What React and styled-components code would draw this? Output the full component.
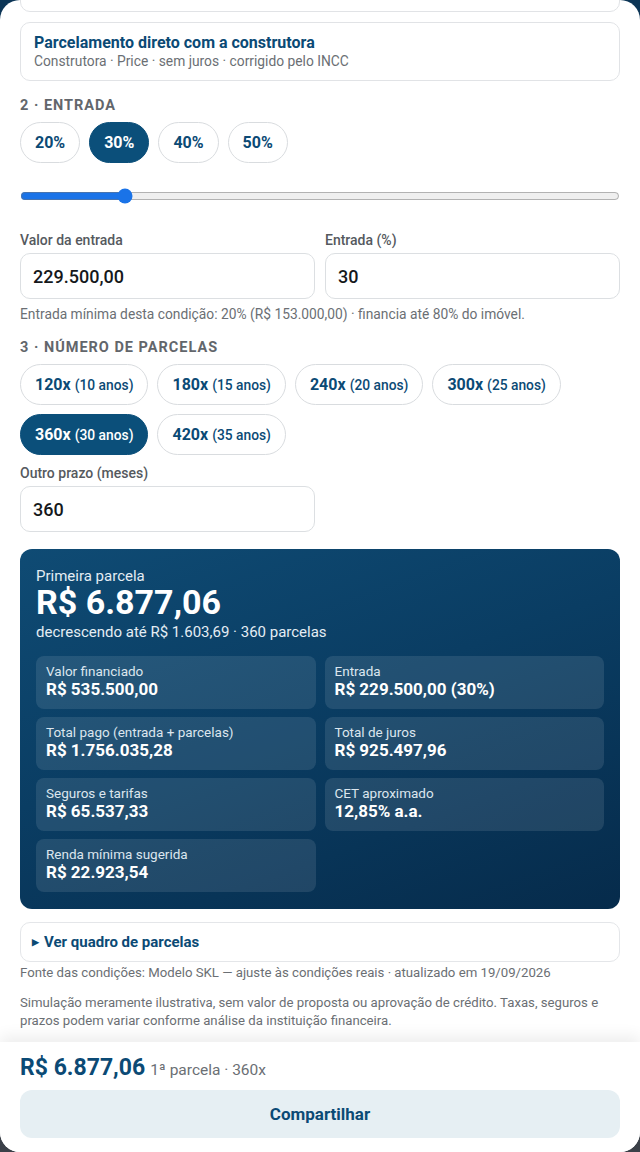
import React from "react";
import styled, { createGlobalStyle } from "styled-components";

const navy = "#0b4a75";

const GlobalStyle = createGlobalStyle`
  * { box-sizing: border-box; }
  html, body {
    margin: 0;
    padding: 0;
    height: 100%;
  }
  body {
    font-family: Roboto, "Noto Sans", Arial, sans-serif;
    background: linear-gradient(180deg, #0c3556 0%, #1f3448 60%, #3b4048 100%);
    overflow: hidden;
  }
`;

const entradas = [20, 30, 40, 50];
const prazos = [
  { n: 120, anos: 10 },
  { n: 180, anos: 15 },
  { n: 240, anos: 20 },
  { n: 300, anos: 25 },
  { n: 360, anos: 30 },
  { n: 420, anos: 35 },
];

const stats = [
  { label: "Valor financiado", value: "R$ 535.500,00" },
  { label: "Entrada", value: "R$ 229.500,00 (30%)" },
  { label: "Total pago (entrada + parcelas)", value: "R$ 1.756.035,28" },
  { label: "Total de juros", value: "R$ 925.497,96" },
  { label: "Seguros e tarifas", value: "R$ 65.537,33" },
  { label: "CET aproximado", value: "12,85% a.a." },
  { label: "Renda mínima sugerida", value: "R$ 22.923,54" },
];

const App = () => {
  return (
    <>
      <GlobalStyle />
      <Sheet>
        <Scroll>
          <Content>
            <OptionCard>
              <OptionTitle>Financiamento bancário</OptionTitle>
              <OptionSub>Banco · SAC · juros pós-fixados</OptionSub>
            </OptionCard>
            <OptionCard>
              <OptionTitle>Parcelamento direto com a construtora</OptionTitle>
              <OptionSub>Construtora · Price · sem juros · corrigido pelo INCC</OptionSub>
            </OptionCard>

            <SectionTitle>2 · Entrada</SectionTitle>
            <Chips>
              {entradas.map((p) => (
                <Chip key={p} $active={p === 30}>{p}%</Chip>
              ))}
            </Chips>
            <Range type="range" min={20} max={80} defaultValue={30} />

            <FieldRow>
              <Field>
                <Label>Valor da entrada</Label>
                <Input defaultValue="229.500,00" />
              </Field>
              <Field>
                <Label>Entrada (%)</Label>
                <Input defaultValue="30" />
              </Field>
            </FieldRow>
            <Hint>Entrada mínima desta condição: 20% (R$ 153.000,00) · financia até 80% do imóvel.</Hint>

            <SectionTitle $gap={18}>3 · Número de parcelas</SectionTitle>
            <Chips>
              {prazos.map((p) => (
                <Chip key={p.n} $active={p.n === 360}>
                  {p.n}x <small>({p.anos} anos)</small>
                </Chip>
              ))}
            </Chips>
            <HalfField>
              <Label>Outro prazo (meses)</Label>
              <Input defaultValue="360" />
            </HalfField>

            <Result>
              <ResultLabel>Primeira parcela</ResultLabel>
              <ResultValue>R$ 6.877,06</ResultValue>
              <ResultSub>decrescendo até R$ 1.603,69 · 360 parcelas</ResultSub>
              <StatGrid>
                {stats.map((s) => (
                  <Stat key={s.label}>
                    <StatLabel>{s.label}</StatLabel>
                    <StatValue>{s.value}</StatValue>
                  </Stat>
                ))}
              </StatGrid>
            </Result>

            <Details>
              <Summary>Ver quadro de parcelas</Summary>
            </Details>
            <Note>Fonte das condições: Modelo SKL — ajuste às condições reais · atualizado em 19/09/2026</Note>
            <Note $gap={12}>
              Simulação meramente ilustrativa, sem valor de proposta ou aprovação de crédito. Taxas, seguros e
              prazos podem variar conforme análise da instituição financeira.
            </Note>
          </Content>
        </Scroll>

        <Footer>
          <FooterPrice>
            <strong>R$ 6.877,06</strong>
            <span>1ª parcela · 360x</span>
          </FooterPrice>
          <ShareButton>Compartilhar</ShareButton>
        </Footer>
      </Sheet>
    </>
  );
};

const Sheet = styled.div`
  height: 100vh;
  background: #fff;
  border-radius: 20px;
  overflow: hidden;
  display: flex;
  flex-direction: column;
`;

const Scroll = styled.div`
  flex: 1;
  overflow: hidden;
`;

const Content = styled.div`
  margin-top: -47px;
  padding: 0 20px;
`;

const OptionCard = styled.div`
  border: 1px solid #e1e3e6;
  border-radius: 10px;
  padding: 10px 13px 10px;
  margin-bottom: 10px;
`;

const OptionTitle = styled.div`
  font-size: 16px;
  font-weight: 700;
  color: ${navy};
  line-height: 20px;
`;

const OptionSub = styled.div`
  font-size: 13.8px;
  color: #6b6f74;
  line-height: 17px;
`;

const SectionTitle = styled.div`
  margin-top: ${(p) => p.$gap || 17}px;
  font-size: 14.5px;
  font-weight: 700;
  letter-spacing: 1px;
  text-transform: uppercase;
  color: #62666b;
  line-height: 16px;
`;

const Chips = styled.div`
  margin-top: 8px;
  display: flex;
  flex-wrap: wrap;
  gap: 9px 9px;
`;

const Chip = styled.button`
  height: 41px;
  padding: 0 14px;
  border-radius: 21px;
  border: 1px solid ${(p) => (p.$active ? "#0b4f7a" : "#d9dcdf")};
  background: ${(p) => (p.$active ? "#0b4f7a" : "#fff")};
  color: ${(p) => (p.$active ? "#fff" : navy)};
  font-family: inherit;
  font-size: 16px;
  font-weight: 700;
  display: flex;
  align-items: center;
  gap: 4px;

  small {
    font-size: 13.8px;
    font-weight: 500;
  }
`;

const Range = styled.input`
  display: block;
  width: 100%;
  height: 16px;
  margin: 25px 0 0;
  accent-color: #1a73e8;
`;

const FieldRow = styled.div`
  margin-top: 28px;
  display: grid;
  grid-template-columns: 1fr 1fr;
  gap: 10px;
`;

const Field = styled.label`
  display: flex;
  flex-direction: column;
`;

const HalfField = styled(Field)`
  width: calc(50% - 5px);
  margin-top: 10px;
`;

const Label = styled.span`
  font-size: 14px;
  font-weight: 500;
  color: #55595e;
  line-height: 16px;
  margin-bottom: 5px;
`;

const Input = styled.input`
  height: 46px;
  border: 1px solid #dcdfe2;
  border-radius: 10px;
  padding: 0 12px;
  font-family: inherit;
  font-size: 18px;
  font-weight: 500;
  color: #15181b;
  outline: none;
`;

const Hint = styled.div`
  margin-top: 7px;
  font-size: 13.8px;
  color: #6b6f74;
  line-height: 16px;
`;

const Result = styled.div`
  margin-top: 17px;
  border-radius: 12px;
  padding: 20px 16px 17px;
  color: #fff;
  background: linear-gradient(160deg, #0f4b74 0%, #0a3d63 45%, #062b4b 100%);
`;

const ResultLabel = styled.div`
  font-size: 15px;
  line-height: 15px;
  color: #e4edf4;
`;

const ResultValue = styled.div`
  font-size: 34px;
  font-weight: 700;
  line-height: 36px;
`;

const ResultSub = styled.div`
  font-size: 15px;
  line-height: 18px;
  color: #e4edf4;
  margin-top: 3px;
`;

const StatGrid = styled.div`
  margin-top: 15px;
  display: grid;
  grid-template-columns: 1fr 1fr;
  gap: 8px 9px;
`;

const Stat = styled.div`
  background: rgba(255, 255, 255, 0.1);
  border-radius: 8px;
  padding: 7px 10px 9px;
  height: 53px;
`;

const StatLabel = styled.div`
  font-size: 13.5px;
  line-height: 16px;
  color: #dce6ee;
`;

const StatValue = styled.div`
  font-size: 17px;
  font-weight: 700;
  line-height: 21px;
`;

const Details = styled.details`
  margin-top: 13px;
  border: 1px solid #e4e6e9;
  border-radius: 10px;
`;

const Summary = styled.summary`
  padding: 0 11px;
  height: 38px;
  display: flex;
  align-items: center;
  font-size: 15px;
  font-weight: 700;
  color: ${navy};
  list-style: none;

  &::before {
    content: "▶";
    font-size: 9px;
    margin-right: 5px;
  }
`;

const Note = styled.div`
  margin-top: ${(p) => p.$gap || 2}px;
  font-size: 13.2px;
  color: #6b6f74;
  line-height: 18px;
`;

const Footer = styled.div`
  flex-shrink: 0;
  background: #fff;
  padding: 13px 20px 14px;
  box-shadow: 0 -6px 14px rgba(0, 0, 0, 0.07);
  position: relative;
`;

const FooterPrice = styled.div`
  display: flex;
  align-items: baseline;
  gap: 5px;
  line-height: 26px;

  strong {
    font-size: 23px;
    font-weight: 700;
    color: ${navy};
  }

  span {
    font-size: 15.5px;
    color: #6b6f74;
  }
`;

const ShareButton = styled.button`
  margin-top: 7px;
  width: 100%;
  height: 48px;
  border: none;
  border-radius: 12px;
  background: #e6eff3;
  color: ${navy};
  font-family: inherit;
  font-size: 17px;
  font-weight: 700;
`;

export default App;
